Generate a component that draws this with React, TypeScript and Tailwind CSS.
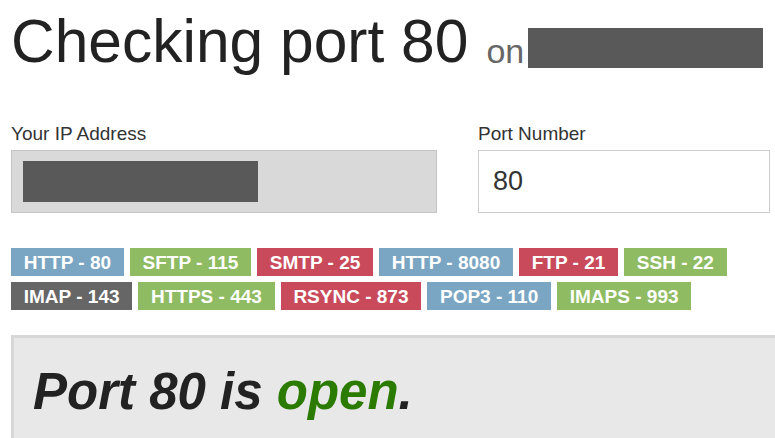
const badgeColors = {
    blue: "bg-[#7ba6c3]",
    green: "bg-[#8fbb62]",
    red: "bg-[#c94b5b]",
    gray: "bg-[#666666]",
};

type Tone = keyof typeof badgeColors;

interface Service {
    name: string;
    port: number;
    tone: Tone;
}

const rows: Service[][] = [
    [
        { name: "HTTP", port: 80, tone: "blue" },
        { name: "SFTP", port: 115, tone: "green" },
        { name: "SMTP", port: 25, tone: "red" },
        { name: "HTTP", port: 8080, tone: "blue" },
        { name: "FTP", port: 21, tone: "red" },
        { name: "SSH", port: 22, tone: "green" },
    ],
    [
        { name: "IMAP", port: 143, tone: "gray" },
        { name: "HTTPS", port: 443, tone: "green" },
        { name: "RSYNC", port: 873, tone: "red" },
        { name: "POP3", port: 110, tone: "blue" },
        { name: "IMAPS", port: 993, tone: "green" },
    ],
];

const Badge: React.FC<{ service: Service }> = ({ service }) => (
    <span
        className={`${badgeColors[service.tone]} h-[28px] px-[12.75px] flex items-center text-white font-bold text-[19px] leading-none`}
    >
        {service.name} - {service.port}
    </span>
);

export default function App() {
    return (
        <div className="w-[775px] h-[438px] overflow-hidden bg-white font-['Liberation_Sans',Arial,sans-serif] text-[#333]">
            <div className="pl-[11px] pt-[8px]">
                <h1 className="flex items-end text-[60.5px] leading-[66px] text-[#222] font-normal">
                    <span>Checking port 80</span>
                    <span className="ml-[18px] text-[34px] leading-[46px] text-[#666]">on</span>
                    <span className="ml-[4px] self-start mt-[20px] w-[235px] h-[40px] bg-[#595959]" />
                </h1>

                <div className="mt-[50px] flex gap-[41px]">
                    <div className="w-[426px]">
                        <label className="block text-[19px] leading-[20px] mb-[6px]">Your IP Address</label>
                        <div className="h-[63px] bg-[#d9d9d9] border border-[#c4c4c4] flex items-center pl-[11px]">
                            <span className="w-[235px] h-[41px] bg-[#595959]" />
                        </div>
                    </div>
                    <div className="w-[292px]">
                        <label className="block text-[19px] leading-[20px] mb-[6px]">Port Number</label>
                        <div className="h-[63px] bg-white border border-[#cccccc] flex items-center pl-[14px]">
                            <span className="text-[27px] text-[#333]">80</span>
                        </div>
                    </div>
                </div>

                <div className="mt-[35px] flex flex-col gap-[6px]">
                    {rows.map((row, i) => (
                        <div key={i} className="flex gap-[6px]">
                            {row.map((s) => (
                                <Badge key={s.name + s.port} service={s} />
                            ))}
                        </div>
                    ))}
                </div>

                <div className="mt-[25px] w-[800px] h-[140px] bg-[#e8e8e8] border-[3px] border-[#d7d7d7] pl-[19px] pt-[26px]">
                    <p className="text-[51px] leading-[55px] font-bold italic text-[#222]">
                        Port 80 is <span className="text-[#2a7b00]">open</span>.
                    </p>
                </div>
            </div>
        </div>
    );
}
